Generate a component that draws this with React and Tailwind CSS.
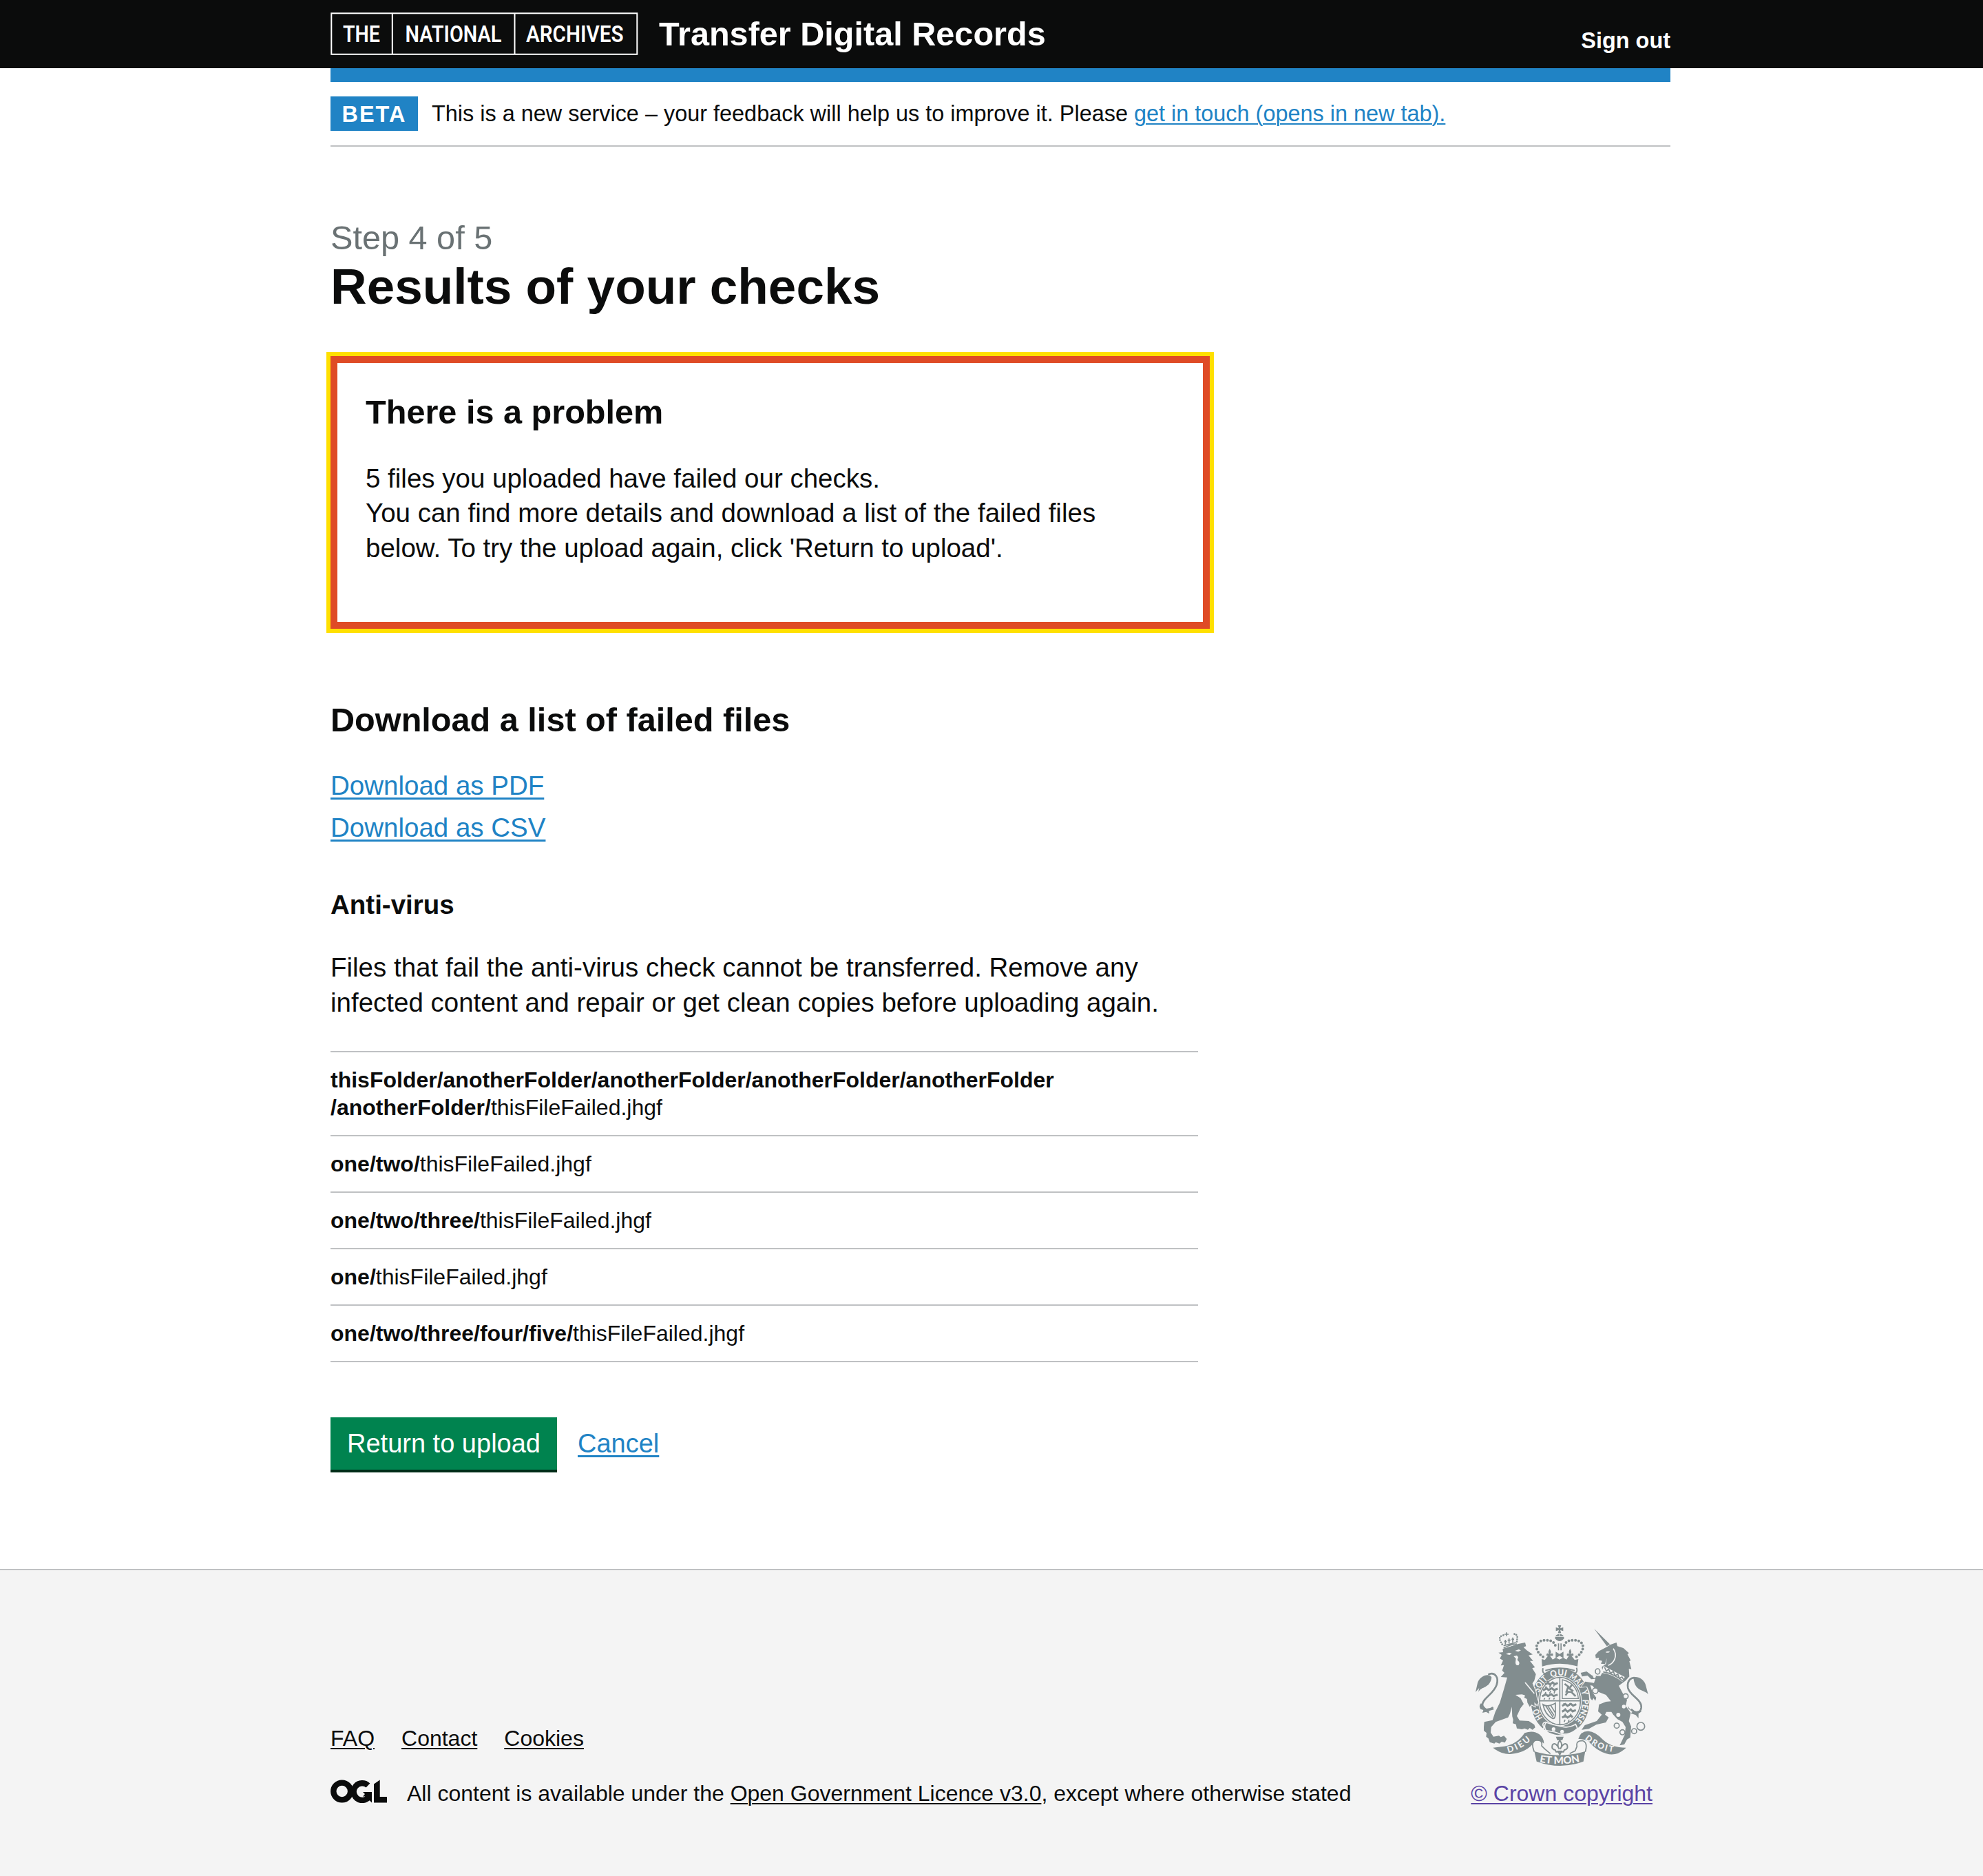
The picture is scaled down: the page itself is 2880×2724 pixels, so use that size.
const Link = ({ children, className = 'decoration-[3px] underline-offset-4' }) => (
  <a href="#" className={`text-[#2083c5] underline ${className}`}>{children}</a>
);

const FooterLink = ({ children }) => (
  <a href="#" className="underline decoration-2 underline-offset-3">{children}</a>
);

const folders = ['one/two/', 'one/two/three/', 'one/', 'one/two/three/four/five/'];

function Logo() {
  return (
    <svg width="447" height="63" viewBox="0 0 447 63" fill="none" stroke="#fff" strokeWidth="2">
      <rect x="1.300" y="1.300" width="444" height="59.500" />
      <path d="M89.800 1v60M267.500 1v60" />
      <g fill="#fff" stroke="none" fontFamily="Roboto, sans-serif" fontWeight="600" fontSize="34">
        <text x="18" y="43" textLength="54" lengthAdjust="spacingAndGlyphs">THE</text>
        <text x="108.500" y="43" textLength="140" lengthAdjust="spacingAndGlyphs">NATIONAL</text>
        <text x="284" y="43" textLength="141.500" lengthAdjust="spacingAndGlyphs">ARCHIVES</text>
      </g>
    </svg>
  );
}

function OglLogo() {
  return (
    <svg width="83" height="34" viewBox="0 0 83 34" fill="#0b0c0c" stroke="#0b0c0c" strokeWidth="0">
      <circle cx="16.700" cy="17" r="12.400" fill="none" strokeWidth="8.400" />
      <path d="M54.500 8.500A12.400 12.400 0 1 0 56 25" fill="none" strokeWidth="8.400" />
      <path d="M47 18H60V33.500L55.500 29 50 24.500H47L50 21z" />
      <path d="M63 6.500L71.700.500V25H82v8.500H63z" />
    </svg>
  );
}

function Lion() {
  return (
    <g>
      <path d="M168 178l20-2-2-14 68-22 30-6 4 16-11 4 14 14 26 18-18 4 20 24-14 0 22 28-12 4 16 26-7 28-8 12 14 36 4 24 8 22-6 12-12-12 2 18-14-8-8 10-10-18-2-16-12-6 4-10-14-4-28 2 22 14 14 26-14 18-16 34 12 20 40 2 24 16 4 12-12 10-12-8-8 8-14-6-12 4-22-4-4-18-14-4 2-16-4-14-2-42-8 30-8 16-54 20-20 22-2 24 12 18 24-4 8 6 14-6 12 14-8 16-14-4-10 8-16-6-6 6-20-6-6-16-10-8 2-16-12-10 0-16 2-22 36-8 12-36 20-40 18-60 14-50-28-2 16-18-10-10 8-24-14 2 10-22-14-8 8-16z" stroke="#f4f4f4" strokeWidth="7" paintOrder="stroke" />
      <path d="M188 160l-6-24-12-18q-6-18 12-16l18-6h22q26-8 26 10l-4 22 2 14z" fill="#f4f4f4" />
      <path d="M184 142l-8-14q-8-18 8-24l12-4M248 130l2-18q0-16-22-16" fill="none" strokeWidth="8" strokeLinecap="round" strokeDasharray="0 10" />
      <path d="M190 159q26-16 58-19M190 148l54-14M198 122v20M214 116v22M230 112v22M193 130h11M208 124h12M225 120h11M203 90v16M194 98h18" fill="none" strokeWidth="5" />
      <path d="M200 184l14-6 12 4-10 6zM240 170l16-6 10 4-12 6z" fill="#f4f4f4" />
      <path d="M234 194l14-4 6 8-4 12q14 12 6 22-14 4-14-12l2-16z" fill="#f4f4f4" />
      <path d="M284 308l40 48" stroke="#f4f4f4" strokeWidth="5" fill="none" />
      <path d="M126 272c28-10 44 14 34 46-12 40-64 60-62 88 2 22 24 26 44 12" fill="none" strokeWidth="8" strokeLinecap="round" />
      <path d="M138 286c-8-22-56-8-62 28l-8 36 16-18-4 18c14-28 50-14 58-64zM92 398c-8 10-8 16-2 26l12 4-4 12 16-4 14 8-2-12 22-6-4-8-30 4z" />
    </g>
  );
}

function Unicorn() {
  return (
    <g>
      <path d="M585 74l73 72-12 12z" />
      <path d="M682 134l4 16 26 8 24 22-6 6 14 26-6 4 9 34-11-2 2 34-16 18-30 22 20 38 16 24-6 26 22 30-8 36 10 24-4 48-14 8-12 22-20 4 8-16 14-30 4-34-14-22-22-12-18-20-8-12-22 0-6 12 16 12-12 22-42 10-32 18-32 4 14-20 52-18 22-28-16-14 4-30 30-12 22-2-22-28-40-16-18-24-10-2 10 32 16 22-4 14-8-12-6 10-8-10-4-28-10-22-26 2 18-24 38 6 6-18-18 2-16-16-24 4-6-16 26-6 24 18 36 2 10-18-4-22 18-12 4-26-8 26-18-2 6-12-16-4 2-10-14 2-2-14 14-16 38-20 12-8z" stroke="#f4f4f4" strokeWidth="5" paintOrder="stroke" />
      <path d="M634 176q10-6 20-2-8 8-20 2z" fill="#f4f4f4" />
      <path d="M626 236l92 48-10 22q-46-36-92-40z" fill="#f4f4f4" />
      <path d="M624 262q48 8 86 40M630 242l8 16 10-8 8 18 12-8 8 18 12-6 6 18 12-6 8 12" fill="none" strokeWidth="5" />
      <path d="M668 160c20 30 6 62-22 74" fill="none" stroke="#f4f4f4" strokeWidth="5" />
      <path d="M774 292c-24-14-48 6-42 40 8 34 62 50 58 86-4 26-28 24-42 8" fill="none" strokeWidth="8" strokeLinecap="round" />
      <path d="M756 288c20-12 50 10 54 34l10 38c-14-22-58-8-64-72zM732 410c12 24 28 28 48 22l12 2-14 10 0 20-12-14-22-8 8-6-18-14z" />
      <g fill="#f4f4f4" strokeWidth="5">
        <ellipse cx="600" cy="260" rx="10" ry="12" /><ellipse cx="586" cy="282" rx="6" ry="7" strokeWidth="0" /><circle cx="590" cy="344" r="12" />
        <circle cx="722" cy="368" r="11" /><circle cx="714" cy="413" r="8" strokeWidth="0" /><circle cx="690" cy="449" r="9" strokeWidth="0" />
        <circle cx="683" cy="496" r="11" /><circle cx="708" cy="525" r="11" /><circle cx="759" cy="520" r="11" /><circle cx="788" cy="499" r="17" />
      </g>
    </g>
  );
}

const mottoWords = [
  ['HO', 'M361 462A98 112 0 0 1 341 418', 46],
  ['SOIT', 'M345 352A98 112 0 0 1 386 293', 70],
  ['QUI', 'M398 287A98 112 0 0 1 466 283', 66],
  ['MAL', 'M475 287A98 112 0 0 1 521 334', 64],
  ['Y', 'M527 345A98 112 0 0 1 534 372', 22],
  ['PENSE', 'M534 382A98 112 0 0 1 497 478', 100],
];

function RoyalArms() {
  return (
    <svg width="251" height="206" viewBox="68 56 753 618" fill="#828d8f" stroke="#828d8f" strokeWidth="0">
      <defs>
        {mottoWords.map(([w, d]) => <path key={w} id={`motto-${w}`} d={d} />)}
        <path id="dieu" d="M210 614Q266 602 316 553" />
        <path id="mon" d="M346 655Q436 672 528 653" />
        <path id="droit" d="M544 554Q602 606 682 612" />
      </defs>
      <ellipse cx="437" cy="391" rx="133" ry="151" fill="#f4f4f4" />
      <ellipse cx="437" cy="391" rx="127" ry="146" />
      <ellipse cx="436" cy="389" rx="95" ry="109" fill="#f4f4f4" />
      <ellipse cx="436" cy="389" rx="89" ry="103" fill="none" strokeWidth="5" />
      <path d="M435 284v208M346 388h178" strokeWidth="5" />
      <path d="M372 316l12-6 8 7 12-9 10 8 12-6M362 342l16-8 8 7 14-8 10 8 16-6M358 368l16-8 10 7 14-8 10 8 18-6M445 410l14-8 10 8 14-9 10 8 14-6M445 435l14-8 10 8 14-9 8 8 14-6M445 461l14-8 10 8 14-9 8 8" fill="none" strokeWidth="9" />
      <path d="M380 302l6 10M376 324l-4 10M396 318l-6 12M412 314l-4 12M374 350l-4 10M396 344l-6 12M414 344l-4 12M370 376l-4 6M392 374l-4 8M412 374l-4 8M452 398l4 8M480 398l-4 10M460 420l-4 8M484 420l-4 10M460 444l-4 10M484 444l-4 10M458 470l-4 10M476 470l-4 10" fill="none" strokeWidth="5" />
      <path d="M456 314l16 12-8 22 22 2 18 18M488 318l-12 16 18 12M470 350l-10 14" fill="none" strokeWidth="8" />
      <path d="M446 296v82h70q-6-68-70-82z" fill="none" strokeWidth="4" />
      <path d="M362 404q20 14 54-6v50q-2 22-14 16-32-18-40-60zM374 410l32 50M384 412l26 40M396 408l18 30" fill="none" strokeWidth="5" />
      <path d="M376 482q-14 16 0 36 40 4 60 14 44 8 76-24l-8-18q-30 18-60 10-36-6-68-18z" stroke="#f4f4f4" strokeWidth="5" />
      <path d="M376 480q-18 2-14 16 8 6 0 14 6 12 20 8" fill="none" stroke="#f4f4f4" strokeWidth="5" />
      <g fill="#f4f4f4"><circle cx="408" cy="511" r="8" /><circle cx="445" cy="522" r="8" /></g>
      <g fill="#f4f4f4" stroke="none" fontFamily="Lato, sans-serif" fontWeight="900" fontSize="38">
        {mottoWords.map(([w, , len]) => (
          <text key={w}><textPath href={`#motto-${w}`} textLength={len} lengthAdjust="spacingAndGlyphs">{w}</textPath></text>
        ))}
      </g>
      <Lion />
      <Unicorn />
      <g>
        <path d="M361 240q74-26 148 0l-9 16q-64-20-130 0z" fill="#f4f4f4" />
        <path d="M358 238l-2-32 14 4 18-24 16 22 14-8 16 8 16-8 14 8 16-24 20 26 16-4-4 32q-76-24-154 0z" />
        <path d="M362 196c-36-22-40-68 4-72 26-2 46 4 52 30M508 196c36-22 40-68-4-72-26-2-46 4-52 30" fill="none" strokeWidth="12" strokeLinecap="round" strokeDasharray="0 14.500" />
        <path d="M414 116q0-16 20-20 20 4 20 20-20 24-40 0zM427 138h5v30h-5zM438 138h5v30h-5z" />
        <path d="M416 108h38M434 92v14" stroke="#f4f4f4" strokeWidth="3" />
        <path d="M427 59h14l-4 13 13-4v16l-13-4 4 13h-14l4-13-13 4V68l13 4z" />
        <path d="M417 174l17 10 17-10v28l-17-10-17 10zM391 162q10 14 2 22 16-8 12 8h-28q-2-16 12-8-8-8 2-22zM480 162q10 14 2 22 16-8 12 8h-28q-2-16 12-8-8-8 2-22z" />
        <path d="M362 246q-6 24 16 26M508 244q8 22-16 28M372 256q62-20 128 0" fill="none" strokeWidth="6" />
      </g>
      <path d="M144 592l50-6q54-8 88-58 38-14 64 6 20 16 20 40-22-20-40-10-28 48-106 56-40 2-76-28zM516 554q10-36 44-34 30 2 62 36 38 36 102 36-40 40-86 26-42-12-76-52-26-14-46-12zM324 608q110 34 222 0l-8 44q-100 38-204 0z" />
      <path d="M324 610q-18-44 8-50 30-2 24 24l14 14 24 20M546 610q12-40-10-48-32-2-26 24l-8 20-24 12" fill="none" strokeWidth="5" />
      <path d="M418 544h34l-6 16h-22z" />
      <path d="M435 560q16 20 2 38 18-34 30-18 6 20-12 22l-4 8h-32l-4-8q-18-2-12-22 12-16 30 18-14-18 2-38zM428 608h14l-7 14z" fill="none" strokeWidth="6" />
      <g fill="#f4f4f4" stroke="none" fontFamily="Lato, sans-serif" fontWeight="900">
        <text fontSize="38"><textPath href="#dieu" textLength="114">DIEU</textPath></text>
        <text fontSize="44"><textPath href="#mon" textLength="178" lengthAdjust="spacingAndGlyphs">ET MON</textPath></text>
        <text fontSize="36"><textPath href="#droit" textLength="138">DROIT</textPath></text>
      </g>
    </svg>
  );
}

export default function App() {
  return (
    <div className="flex min-h-[2724px] flex-col bg-white font-['Liberation_Sans',sans-serif] text-[38.5px] leading-[50.67px] text-[#0b0c0c]">
      <header className="h-[99px] bg-[#0b0c0c] pl-[480px] pr-[454px] text-white">
        <div className="flex">
          <div className="pt-[18px]"><Logo /></div>
          <div className="ml-[30px] mt-[22px] text-[48.6px] font-bold leading-[54px]">Transfer Digital Records</div>
          <div className="ml-auto mt-[38px] text-[32.43px] font-bold leading-[42px]">Sign out</div>
        </div>
      </header>
      <div className="ml-[480px] mr-[454px] border-t-[20px] border-[#2083c5]">
        <div className="flex h-[94px] items-center border-b-2 border-[#bfc1c3] text-[32.43px] leading-[42px]">
          <strong className="flex h-[50px] w-[127px] items-center justify-center bg-[#2083c5] pt-0.5 tracking-[2px] text-white">BETA</strong>
          <span className="ml-5">This is a new service – your feedback will help us to improve it. Please <Link className="decoration-2 underline-offset-3">get in touch (opens in new tab).</Link></span>
        </div>
      </div>
      <main className="ml-[480px] w-[1260px] pt-[107px]">
        <div className="text-[48.64px] leading-[51px] text-[#6a7274]">Step 4 of 5</div>
        <h1 className="text-[72.9px] font-bold leading-[90px]">Results of your checks</h1>
        <section className="mt-[56px] h-[396px] w-[1277px] border-10 border-[#df4b26] px-[41px] pt-[43px] outline-6 outline-[#ffe000]">
          <h2 className="text-[48.64px] font-bold leading-[56px]">There is a problem</h2>
          <p className="mt-[43.5px] w-[1100px]">5 files you uploaded have failed our checks.<br />You can find more details and download a list of the failed files below. To try the upload again, click 'Return to upload'.</p>
        </section>
        <h2 className="mt-[102px] text-[48.64px] font-bold leading-[60px]">Download a list of failed files</h2>
        <ul className="mt-[41px]">
          <li className="mb-2.5"><Link>Download as PDF</Link></li>
          <li><Link>Download as CSV</Link></li>
        </ul>
        <h3 className="mt-[62px] font-bold">Anti-virus</h3>
        <p className="mt-10">Files that fail the anti-virus check cannot be transferred. Remove any infected content and repair or get clean copies before uploading again.</p>
        <ul className="mt-[44.6px] border-t-2 border-[#bfc1c3] text-[32px] leading-10">
          <li className="border-b-2 border-[#bfc1c3] py-5"><b>thisFolder/anotherFolder/anotherFolder/anotherFolder/anotherFolder<br />/anotherFolder/</b>thisFileFailed.jhgf</li>
          {folders.map((path) => (
            <li key={path} className="border-b-2 border-[#bfc1c3] py-5"><b>{path}</b>thisFileFailed.jhgf</li>
          ))}
        </ul>
        <div className="mt-20 flex h-20 text-[38px] leading-[77px]">
          <button className="w-[329px] bg-[#00834f] pb-[3px] shadow-[0_-4px_0_#002d18_inset]">
            <span className="text-white">Return to upload</span>
          </button>
          <Link className="ml-[30px] decoration-[3px] underline-offset-4">Cancel</Link>
        </div>
      </main>
      <footer className="mt-auto flex h-[446px] justify-between border-t-2 border-[#bfc1c3] bg-[#f4f4f4] px-[480px] text-[32px] leading-10">
        <div className="pt-[224px]">
          <div className="flex gap-[39px]">
            {['FAQ', 'Contact', 'Cookies'].map((t) => <FooterLink key={t}>{t}</FooterLink>)}
          </div>
          <div className="mt-10 flex">
            <OglLogo />
            <span className="ml-7">All content is available under the <FooterLink>Open Government Licence v3.0</FooterLink>, except where otherwise stated</span>
          </div>
        </div>
        <div className="flex flex-col items-center pt-[79px]">
          <RoyalArms />
          <a href="#" className="mt-[19px] text-[#5a43a5] underline decoration-2 underline-offset-3">© Crown copyright</a>
        </div>
      </footer>
    </div>
  );
}
